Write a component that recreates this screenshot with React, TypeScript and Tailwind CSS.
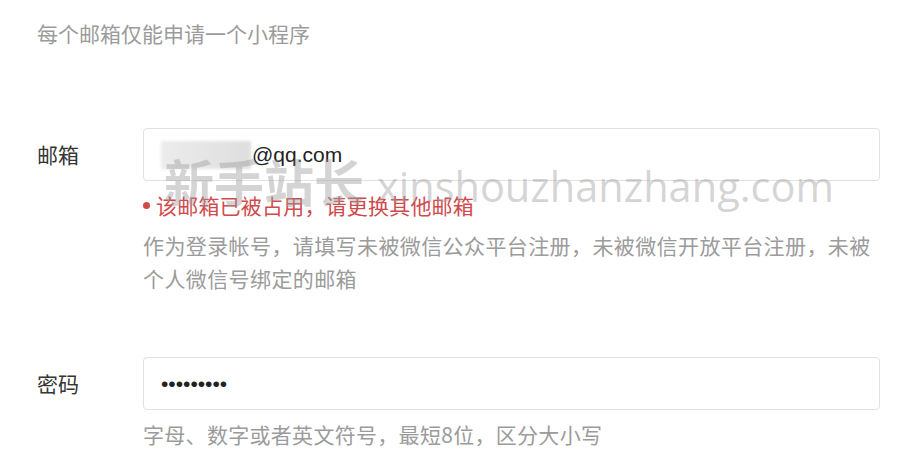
import React from 'react';

const cjk = "font-['Noto_Sans_CJK_SC','Noto_Sans',sans-serif]";

const FormRow: React.FC<{ label: string; children: React.ReactNode }> = ({ label, children }) => (
    <div className="flex">
        <div className="w-[106px] shrink-0 text-[21px] leading-[53px] text-[#353535]">{label}</div>
        <div className="flex-1">{children}</div>
    </div>
);

const Field: React.FC<{ children: React.ReactNode }> = ({ children }) => (
    <div className="flex h-[53px] items-center rounded-[4px] border border-[#e1e1e1] bg-white px-[17px]">
        {children}
    </div>
);

export default function App() {
    return (
        <div className={`relative h-[463px] w-[900px] overflow-hidden bg-white pl-[37px] pr-[20px] ${cjk}`}>
            <p className="pt-[17px] text-[21px] leading-[33px] text-[#9b9b9b]">每个邮箱仅能申请一个小程序</p>

            <div className="mt-[78px]">
                <FormRow label="邮箱">
                    <Field>
                        <span className="flex items-center font-['Liberation_Sans',sans-serif] text-[21px] text-[#222]">
                            <span className="mr-[1px] h-[28px] w-[90px] bg-gradient-to-r from-[#ececec] to-[#dedede] blur-[1.5px]" />
                            @qq.com
                        </span>
                    </Field>
                    <div className="mt-[8px] flex items-center text-[21px] leading-[33px] text-[#d0494b]">
                        <span className="mr-[6px] inline-block size-[7px] rounded-full bg-[#d0494b]" />
                        <span className="tracking-[0.2px]">该邮箱已被占用，请更换其他邮箱</span>
                    </div>
                    <p className="mt-[7px] text-[21px] leading-[33px] tracking-[0.4px] text-[#9b9b9b]">
                        作为登录帐号，请填写未被微信公众平台注册，未被微信开放平台注册，未被个人微信号绑定的邮箱
                    </p>
                </FormRow>
            </div>

            <div className="mt-[62px]">
                <FormRow label="密码">
                    <Field>
                        <span className="font-['Liberation_Sans',sans-serif] text-[21px] text-[#222]">•••••••••</span>
                    </Field>
                    <p className="mt-[8px] text-[21px] leading-[33px] tracking-[0.3px] text-[#9b9b9b]">
                        字母、数字或者英文符号，最短8位，区分大小写
                    </p>
                </FormRow>
            </div>

            <div className="pointer-events-none absolute left-[164px] top-[155px] flex items-baseline whitespace-nowrap text-[rgba(160,160,160,0.45)]">
                <span className="text-[50px] font-bold leading-none">新手站长</span>
                <span className="ml-[13px] font-['Open_Sans',sans-serif] text-[41.5px] leading-none">xinshouzhanzhang.com</span>
            </div>
        </div>
    );
}
